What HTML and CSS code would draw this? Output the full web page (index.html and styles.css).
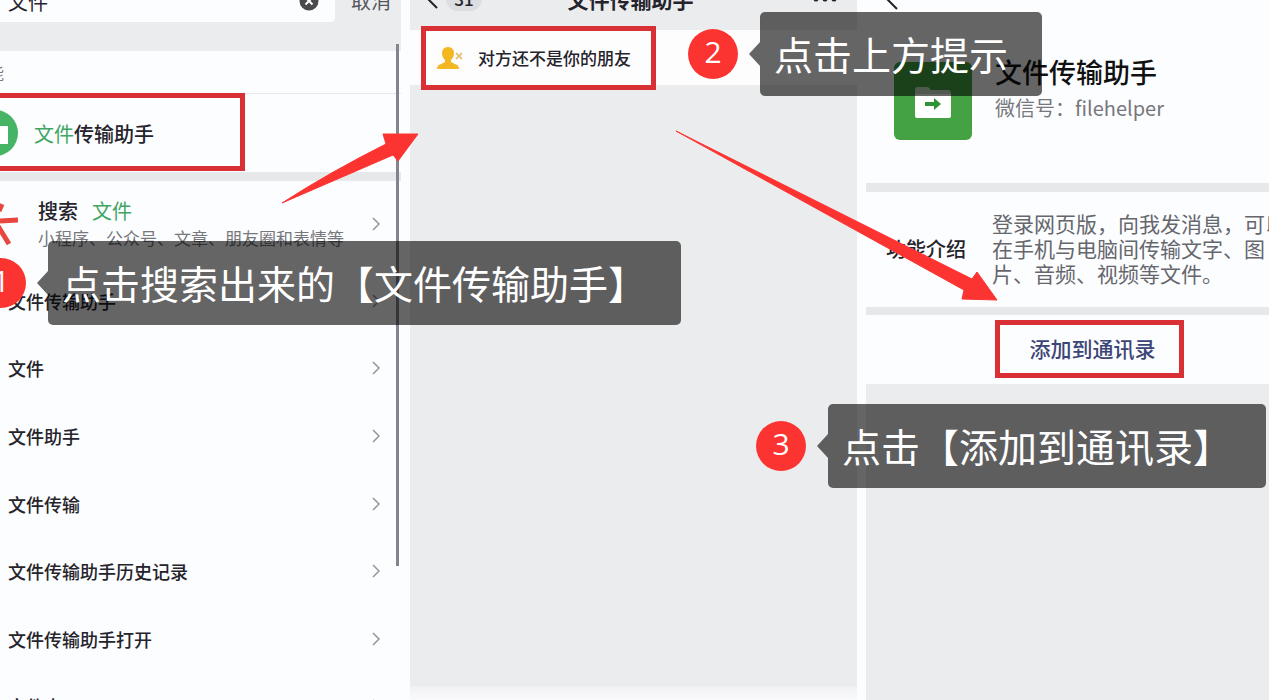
FILE: index.html
```html
<!DOCTYPE html>
<html lang="zh-CN">
<head>
    <meta charset="UTF-8">
    <meta name="viewport" content="width=device-width, initial-scale=1.0">
    <title>添加文件传输助手</title>
    <link rel="stylesheet" href="styles.css">
</head>
<body>
    <main class="guide">
        <div class="board">
            <!-- 第一步：搜索 -->
            <section class="panel search-panel">
                <div class="search-inner">
                    <div class="search-bar">
                        <div class="search-field">
                            <input type="text" class="search-input" value="文件" aria-label="搜索">
                            <button type="button" class="clear-btn" aria-label="清除">
                                <svg width="20" height="20" viewBox="0 0 20 20">
                                    <circle cx="10" cy="10" r="9.5" fill="#4a4a4d"/>
                                    <path d="M6.5 6.5l7 7M13.5 6.5l-7 7" stroke="#fff" stroke-width="2"/>
                                </svg>
                            </button>
                        </div>
                        <button type="button" class="cancel-btn">取消</button>
                    </div>

                    <h2 class="group-label">功能</h2>
                    <a href="#" class="contact-row">
                        <svg class="row-icon" width="46" height="46" viewBox="0 0 46 46">
                            <circle cx="23" cy="23" r="23" fill="#45b565"/>
                            <path d="M12 14h9l3 2h12v18H12z" fill="#fff"/>
                        </svg>
                        <span><em>文件</em>传输助手</span>
                    </a>

                    <a href="#" class="search-row">
                        <svg class="row-icon" width="46" height="46" viewBox="0 0 46 46">
                            <path d="M28 20l18-1M26 25l11 18M27 10l3-7M18 20L0 19M20 25L9 43M20 14L14 3" stroke="#e8473f" stroke-width="5"/>
                        </svg>
                        <span class="search-text">
                            <span class="search-title">搜索<em>文件</em></span>
                            <span class="search-desc">小程序、公众号、文章、朋友圈和表情等</span>
                        </span>
                        <svg class="chevron" width="10" height="16" viewBox="0 0 10 16"><path d="M2 2l6 6-6 6"/></svg>
                    </a>

                    <nav class="suggestions">
                        <a href="#">文件传输助手<svg class="chevron" width="10" height="16" viewBox="0 0 10 16"><path d="M2 2l6 6-6 6"/></svg></a>
                        <a href="#">文件<svg class="chevron" width="10" height="16" viewBox="0 0 10 16"><path d="M2 2l6 6-6 6"/></svg></a>
                        <a href="#">文件助手<svg class="chevron" width="10" height="16" viewBox="0 0 10 16"><path d="M2 2l6 6-6 6"/></svg></a>
                        <a href="#">文件传输<svg class="chevron" width="10" height="16" viewBox="0 0 10 16"><path d="M2 2l6 6-6 6"/></svg></a>
                        <a href="#">文件传输助手历史记录<svg class="chevron" width="10" height="16" viewBox="0 0 10 16"><path d="M2 2l6 6-6 6"/></svg></a>
                        <a href="#">文件传输助手打开<svg class="chevron" width="10" height="16" viewBox="0 0 10 16"><path d="M2 2l6 6-6 6"/></svg></a>
                        <a href="#">文件夹<svg class="chevron" width="10" height="16" viewBox="0 0 10 16"><path d="M2 2l6 6-6 6"/></svg></a>
                    </nav>
                </div>
                <div class="scrollbar"></div>
            </section>

            <!-- 第二步：聊天 -->
            <section class="panel chat-panel">
                <header class="chat-header">
                    <a href="#" class="back" aria-label="返回">
                        <svg width="12" height="20" viewBox="0 0 12 20"><path d="M11 1L2 10l9 9"/></svg>
                    </a>
                    <span class="unread">31</span>
                    <h1 class="chat-title">文件传输助手</h1>
                    <button type="button" class="more-btn" aria-label="更多">
                        <svg width="24" height="6" viewBox="0 0 24 6"><circle cx="3" cy="3" r="2.5"/><circle cx="12" cy="3" r="2.5"/><circle cx="21" cy="3" r="2.5"/></svg>
                    </button>
                </header>
                <a href="#" class="friend-tip">
                    <svg width="28" height="24" viewBox="0 0 28 24">
                        <path d="M12 1c4 0 6 3 6 6 0 3-1 5-3 7v2l6 3c1 .5 2 2 2 4H1c0-2 1-3.500 2-4l6-3v-2c-2-2-3-4-3-7 0-3 2-6 6-6z" fill="#f3b722"/>
                        <path d="M20 7l6 6M26 7l-6 6" stroke="#e3b65c" stroke-width="1.500"/>
                    </svg>
                    <span>对方还不是你的朋友</span>
                </a>
                <div class="chat-footer"></div>
            </section>

            <!-- 第三步：资料页 -->
            <section class="panel profile-panel">
                <header class="profile-header">
                    <a href="#" class="back" aria-label="返回">
                        <svg width="12" height="20" viewBox="0 0 12 20"><path d="M11 1L2 10l9 9"/></svg>
                    </a>
                </header>
                <div class="profile-card">
                    <svg class="avatar" width="78" height="78" viewBox="0 0 78 78">
                        <rect width="78" height="78" rx="6" fill="#44a242"/>
                        <path d="M21 28q0-3 3-3h9q2 0 3 2l1 1h17q3 0 3 3v4H21z" fill="#c9dfc8"/>
                        <path d="M21 32h36v22q0 2-2 2H23q-2 0-2-2z" fill="#fff"/>
                        <path d="M31 40h9v-4l7 6-7 6v-4h-9z" fill="#2f9438"/>
                    </svg>
                    <div>
                        <h2 class="profile-name">文件传输助手</h2>
                        <p class="profile-id">微信号：filehelper</p>
                    </div>
                </div>
                <div class="intro">
                    <h3 class="intro-label">功能介绍</h3>
                    <p class="intro-text">登录网页版，向我发消息，可以<br>在手机与电脑间传输文字、图<br>片、音频、视频等文件。</p>
                </div>
                <div class="add-row">
                    <button type="button" class="add-btn">添加到通讯录</button>
                </div>
            </section>
        </div>

        <!-- 标注层 -->
        <div class="mark mark-contact"></div>
        <div class="mark mark-tip"></div>
        <svg class="arrows" width="1269" height="700" viewBox="0 0 1269 700">
            <path d="M282 203Q330 172 386 144L383 134H418L398 161L393 155Z"/>
            <path d="M676 131L972 279L977 272L997 300L962 299L964 290Z"/>
        </svg>
        <div class="step step-1"><span class="num">1</span><p class="callout">点击搜索出来的【文件传输助手】</p></div>
        <div class="step step-2"><span class="num">2</span><p class="callout">点击上方提示</p></div>
        <div class="step step-3"><span class="num">3</span><p class="callout">点击【添加到通讯录】</p></div>
    </main>
</body>
</html>
```
FILE: styles.css
```css
* {
    margin: 0;
    padding: 0;
    box-sizing: border-box;
}

:root {
    --page-bg: #fcfdfe;
    --gray-bg: #ebecee;
    --line: #e7e8ea;
    --text: #25232b;
    --muted: #77777d;
    --green: #3fa563;
    --red: #d93035;
    --arrow-red: #fb3432;
    --callout-bg: rgba(0, 0, 0, 0.6);
}

body {
    font-family: "Noto Sans CJK SC", sans-serif;
    color: var(--text);
    background: var(--page-bg);
    overflow: hidden;
}

a {
    color: inherit;
    text-decoration: none;
}

button,
input {
    font-family: inherit;
    color: inherit;
    background: none;
    border: none;
    outline: none;
}

em {
    font-style: normal;
    font-weight: 400;
    color: var(--green);
}

svg {
    display: block;
    flex-shrink: 0;
}

.guide {
    position: relative;
    height: 100vh;
    overflow: hidden;
}

/* 三个手机界面并排，顶部略微裁掉 */
.board {
    display: grid;
    grid-template-columns: 401fr 447fr 403fr;
    gap: 9px;
    height: calc(100vh + 30px);
    margin-top: -30px;
}

.panel {
    position: relative;
    min-width: 0;
    overflow: hidden;
}

.back svg {
    fill: none;
    stroke: #222;
    stroke-width: 2;
}

/* 搜索界面 */
.search-inner {
    margin-left: -40px;
}

.search-bar {
    display: flex;
    align-items: center;
    gap: 16px;
    padding: 10px 10px 29px 0;
    background: var(--gray-bg);
}

.search-field {
    display: flex;
    align-items: center;
    flex: 1;
    height: 42px;
    padding: 0 16px 0 48px;
    background: var(--page-bg);
    border-radius: 4px;
}

.search-input {
    flex: 1;
    min-width: 0;
    font-size: 20px;
}

.cancel-btn {
    font-size: 20px;
    line-height: 28px;
    color: #55555c;
}

.group-label {
    padding-left: 12px;
    font-size: 16px;
    font-weight: 400;
    line-height: 42px;
    color: var(--muted);
}

.contact-row {
    display: flex;
    align-items: center;
    gap: 16px;
    height: 79px;
    padding-left: 12px;
    border-top: 1px solid var(--line);
    font-size: 20px;
    font-weight: 500;
}

.search-row {
    display: flex;
    align-items: center;
    gap: 20px;
    height: 95px;
    padding: 0 20px 0 12px;
    border-top: 9px solid var(--line);
}

.search-text {
    display: flex;
    flex-direction: column;
    flex: 1;
}

.search-title {
    font-size: 20px;
    font-weight: 500;
    line-height: 28px;
}

.search-title em {
    margin-left: 14px;
}

.search-desc {
    font-size: 17px;
    line-height: 26px;
    color: var(--muted);
}

.chevron {
    fill: none;
    stroke: #96969c;
    stroke-width: 1.5;
}

.suggestions {
    display: flex;
    flex-direction: column;
    height: 473px;
}

.suggestions a {
    display: flex;
    align-items: center;
    justify-content: space-between;
    flex: 1;
    padding: 0 20px 0 48px;
    font-size: 18px;
    font-weight: 500;
}

.scrollbar {
    position: absolute;
    top: 74px;
    right: 2px;
    width: 3px;
    height: 522px;
    background: #84838e;
}

/* 聊天界面 */
.chat-panel {
    display: flex;
    flex-direction: column;
    background: var(--gray-bg);
}

.chat-header {
    display: flex;
    align-items: center;
    height: 58px;
    padding: 0 20px 0 16px;
}

.unread {
    width: 36px;
    margin-left: 8px;
    border-radius: 12px;
    background: #dcdde0;
    font-size: 17px;
    font-weight: 500;
    line-height: 24px;
    text-align: center;
}

.chat-title {
    flex: 1;
    padding-right: 34px;
    font-size: 21px;
    font-weight: 700;
    text-align: center;
}

.more-btn svg {
    fill: #222;
}

.friend-tip {
    display: flex;
    align-items: center;
    gap: 14px;
    height: 57px;
    padding-left: 26px;
    background: #fdfdfe;
    border-top: 2px solid var(--gray-bg);
    font-size: 17px;
    font-weight: 500;
}

.chat-footer {
    height: 14px;
    margin-top: auto;
    background: linear-gradient(#f0f1f3, #fafafc);
}

/* 资料页 */
.profile-panel {
    background: var(--gray-bg);
}

.profile-header {
    display: flex;
    align-items: center;
    height: 60px;
    padding-left: 20px;
    background: var(--page-bg);
}

.profile-card {
    display: flex;
    align-items: center;
    gap: 23px;
    height: 153px;
    padding: 0 0 11px 28px;
    background: var(--page-bg);
}

.profile-name {
    font-size: 27px;
    font-weight: 500;
    line-height: 36px;
    color: #111;
}

.profile-id {
    font-size: 20px;
    line-height: 36px;
    color: var(--muted);
}

.profile-card > div {
    padding-bottom: 22px;
}

.intro {
    display: flex;
    align-items: center;
    gap: 24px;
    height: 124px;
    padding: 0 0 2px 20px;
    background: var(--page-bg);
    border-top: 9px solid var(--line);
    white-space: nowrap;
}

.intro-label {
    flex-shrink: 0;
    width: 82px;
    font-size: 20px;
    font-weight: 500;
}

.intro-text {
    font-size: 21px;
    line-height: 25px;
    color: #66666d;
}

.add-row {
    display: flex;
    justify-content: center;
    height: 77px;
    padding: 5px 0 5px 44px;
    background: var(--page-bg);
    border-top: 8px solid var(--line);
}

.add-btn {
    width: 189px;
    height: 58px;
    padding: 0 0 2px 6px;
    border: 5px solid var(--red);
    font-size: 21px;
    font-weight: 500;
    color: #3c4676;
}

/* 红框、箭头和步骤提示 */
.mark {
    position: absolute;
    border: 5px solid var(--red);
}

.mark-contact {
    top: 93px;
    left: -10px;
    width: 255px;
    height: 78px;
}

.mark-tip {
    top: 26px;
    left: 421px;
    width: 235px;
    height: 64px;
}

.arrows {
    position: absolute;
    top: 0;
    left: 0;
    fill: var(--arrow-red);
    stroke: var(--arrow-red);
    stroke-width: 1;
}

.step {
    position: absolute;
    display: flex;
    align-items: center;
    gap: 22px;
}

.step-1 {
    top: 241px;
    left: -24px;
}

.step-2 {
    top: 12px;
    left: 688px;
}

.step-3 {
    top: 404px;
    left: 756px;
}

.num {
    width: 50px;
    height: 50px;
    border-radius: 50%;
    background: var(--arrow-red);
    color: #fff;
    font-family: "Open Sans", sans-serif;
    font-size: 30px;
    line-height: 46px;
    text-align: center;
}

.callout {
    position: relative;
    height: 84px;
    padding: 0 34px 0 14px;
    border-radius: 5px;
    background: var(--callout-bg);
    color: #fff;
    font-size: 39px;
    line-height: 82px;
    white-space: nowrap;
}

.callout::before {
    content: '';
    position: absolute;
    top: 30px;
    left: -11px;
    border: 12px solid transparent;
    border-left: none;
    border-right: 11px solid var(--callout-bg);
}
```
